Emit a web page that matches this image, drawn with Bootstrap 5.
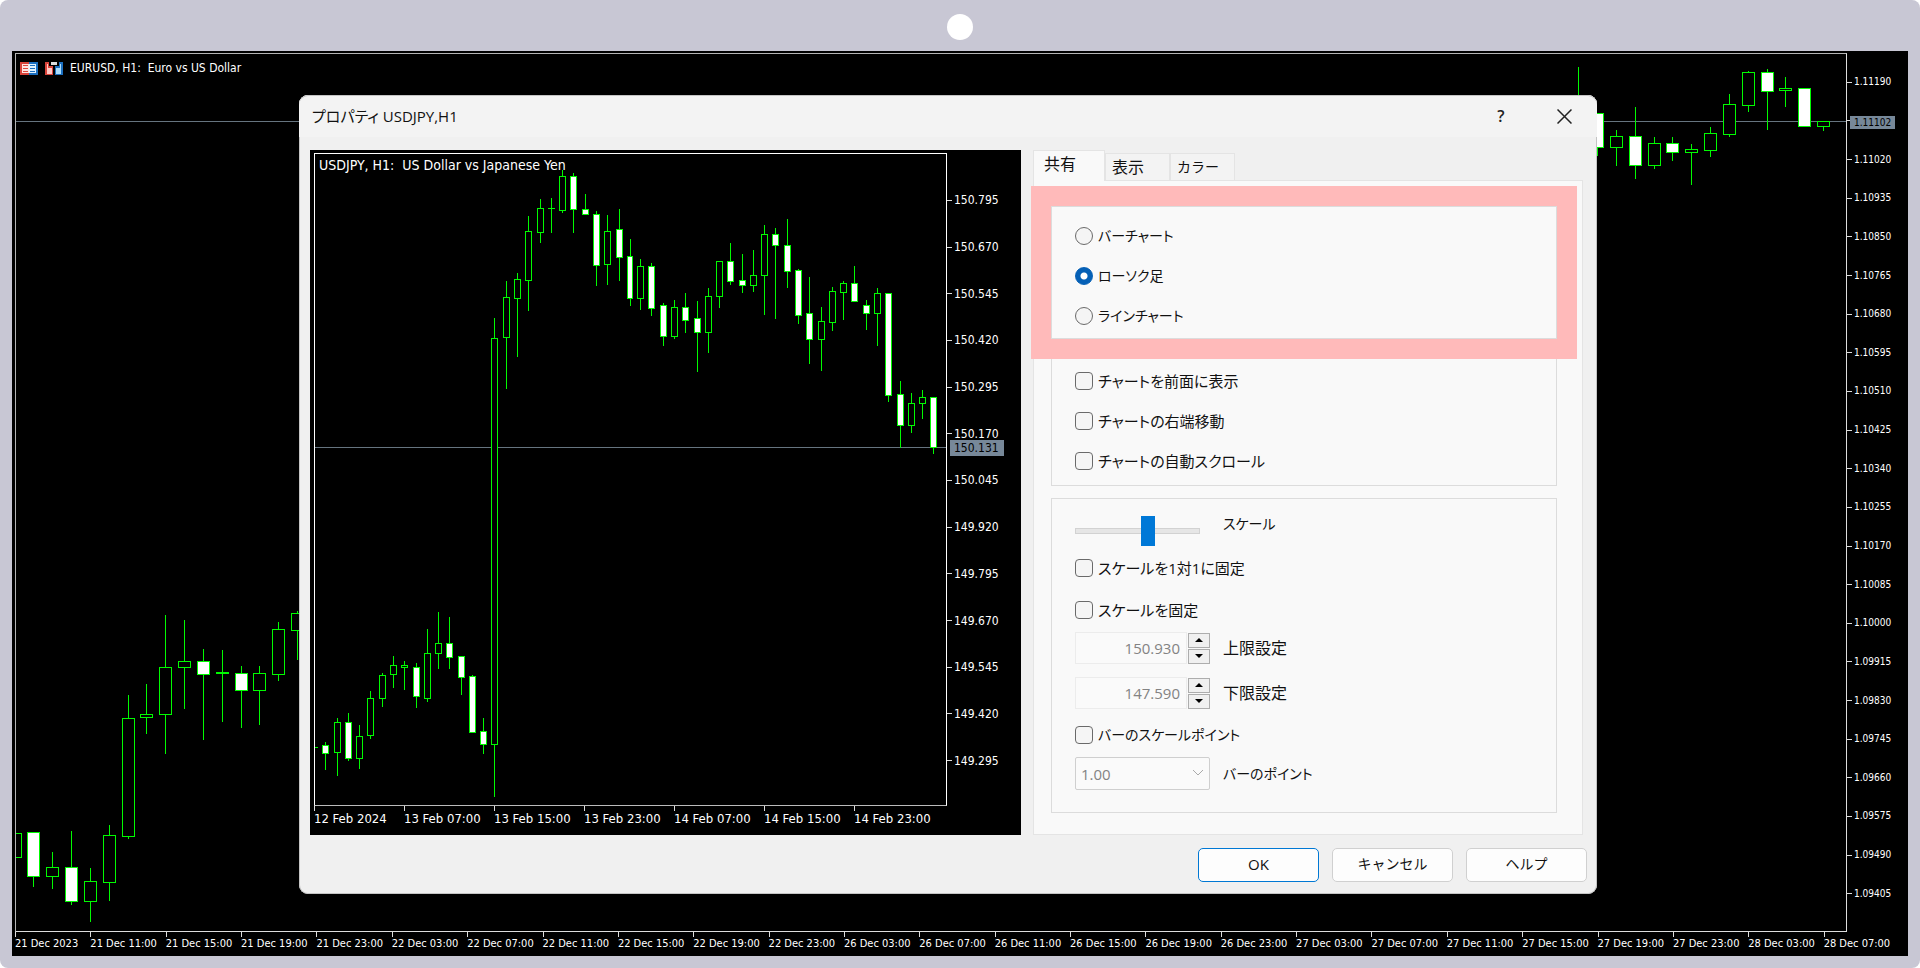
<!DOCTYPE html>
<html lang="ja">
<head>
<meta charset="utf-8">
<meta name="viewport" content="width=device-width, initial-scale=1">
<title>プロパティ USDJPY,H1</title>
<link href="https://cdn.jsdelivr.net/npm/bootstrap@5.3.0/dist/css/bootstrap.min.css" rel="stylesheet">
<style>
  html { background: #fff; }
  body { background: #fff; font-family: "Open Sans", "Noto Sans CJK JP", sans-serif; font-size: 16px; line-height: 24px; color: #111; }
  .bezel { background: #c8c7d4; border-radius: 8px; padding: 0 12px 12px; }
  .bezel-top { height: 52px; padding-top: 2px; }
  .camera { width: 26px; height: 26px; background: #fff; border-radius: 50%; }

  /* chart frames */
  .chart { background: #000; color: #fff; font-family: "DejaVu Sans Condensed", "DejaVu Sans", sans-serif; display: grid; min-width: 0; }
  .chart-main { grid-template: minmax(0, 1fr) 24px / minmax(0, 1fr) 61px; padding: 2px 0 0 3px; font-size: 10px; }
  .chart-preview { grid-template: minmax(0, 1fr) 29px / minmax(0, 1fr) 74px; padding: 3px 0 0 4px; font-size: 12px; }
  .plot { border: 1px solid #b4b4b4; border-bottom-color: #ddd; border-right-color: #ddd; min-height: 0; }
  .chart-preview .plot { border-color: #fff; border-bottom-color: #bbb; }
  .candles { display: block; width: 100%; height: 100%; }
  .caption-line { top: 0; left: 0; white-space: pre; }
  .chart-main .caption-line { padding: 7px 4px; gap: 7px; font-size: 12px; line-height: 14px; }
  .chart-preview .caption-line { padding: 3px 4px; font-size: 14px; line-height: 16px; }
  .prices { line-height: 12px; }
  .chart-main .prices { padding: 10px 0 19px; }
  .chart-preview .prices { padding: 24px 0 22px; }
  .prices span { flex: 1 1 0; display: flex; align-items: center; }
  .prices span::before { content: ""; width: 5px; height: 1px; background: #ddd; margin-right: 2px; }
  .times { grid-column: 1 / -1; }
  .times span { flex: 1 1 0; min-width: 0; white-space: nowrap; }
  .times span::before { content: ""; display: block; width: 1px; height: 5px; background: #ddd; }
  .chart-main .times { font-size: 11px; line-height: 13px; margin-right: 9px; }
  .chart-main .times span { text-indent: -2px; }
  .chart-preview .times { font-size: 13px; line-height: 16px; margin-right: 77px; }
  .bid { background: #778899; color: #000; left: 3px; }
  .chart-main .bid { margin-top: -5px; padding: 0 4px; line-height: 13px; }
  .chart-preview .bid { margin-top: -7px; padding: 0 5px 0 4px; line-height: 16px; }

  /* dialog window */
  .dialog { left: 287px; right: 311px; top: 44px; bottom: 62px; background: #f0f0f0; border-radius: 9px; box-shadow: inset 0 0 0 1px #c4c4c4; font-feature-settings: "palt"; }
  .dialog-title { height: 42px; background: #f3f3f3; border-radius: 9px 9px 0 0; padding: 0 23px 0 13px; box-shadow: inset 0 1px #c4c4c4; font-size: 15px; }
  .dialog-title button { background: none; border: 0; padding: 0; width: 20px; height: 24px; color: #222; }
  .dialog-title .help { margin-right: 43px; font-size: 16px; font-weight: 600; }
  .dialog-body { padding: 13px 14px 0 11px; gap: 12px; }
  .side { width: 550px; flex: none; }
  .tabs { height: 30px; }
  .tabs button { border: 1px solid #e4e4e4; border-bottom: 0; background: #f3f3f3; padding: 0 6px; text-align: left; width: 65px; height: 27px; color: #111; }
  .tabs button.active { width: 72px; height: 31px; background: #f9f9f9; padding: 0 10px 4px; margin-bottom: -1px; z-index: 1; }
  .pane { background: #f9f9f9; border: 1px solid #e4e4e4; padding: 25px 25px 21px 17px; }
  .group { border: 1px solid #dcdcdc; background: #f9f9f9; padding: 0 23px; }
  .group-style { box-shadow: 0 0 0 20px #ffbaba; padding-top: 9px; padding-bottom: 2px; z-index: 1; }
  .group-show { padding-top: 12px; padding-bottom: 4px; margin-top: 9px; }
  .group-scale { margin-top: 12px; padding-top: 13px; }
  .opt { height: 40px; gap: 5px; font-size: 15px; }
  .kana, .opt.kana, .tabs .kana { font-size: 14px; }
  .opt .form-check-input { width: 18px; height: 18px; margin: 0; border: 1px solid #6a6a6a; background-color: #f5f5f5; flex: none; }
  .opt .form-check-input[type=checkbox] { border-radius: 4px; }
  .opt .form-check-input:checked { background: radial-gradient(circle, #fff 0 3px, #0560b6 4px); border-color: #0560b6; }
  .row-line { gap: 13px; }
  .ctl { width: 135px; flex: none; gap: 1px; }
  .gap-top-s { margin-top: 2px; }
  .gap-top-m { margin-top: 6px; }
  .gap-top-l { margin-top: 13px; }
  .scale { appearance: none; display: block; width: 125px; height: 30px; background: none; margin: 4px 0 0; }
  .scale::-webkit-slider-runnable-track { height: 6px; background: #e6e6e6; border: 1px solid #d2d2d2; }
  .scale::-webkit-slider-thumb { appearance: none; width: 14px; height: 30px; margin-top: -13px; background: #0078d7; border: 0; border-radius: 0; }
  .num { width: 112px; height: 32px; border: 1px solid #ececec; background: #fafafa; color: #838383; text-align: right; padding: 0 6px; font-size: 15px; }
  .spin button { width: 22px; height: 15px; border: 1px solid #adadad; background: #f0f0f0; padding: 0; display: flex; align-items: center; justify-content: center; }
  .spin button + button { margin-top: 1px; }
  .points { width: 135px; height: 33px; border: 1px solid #cfcfcf; border-radius: 2px; color: #838383; background: #fafafa; padding: 0 5px; appearance: none; opacity: 1; font-size: 15px; }
  .chev { right: 6px; top: 12px; pointer-events: none; }
  .dialog-foot { padding: 13px 10px 12px; gap: 13px; }
  .dialog-foot button { width: 121px; height: 34px; background: #fdfdfd; border: 1px solid #d0d0d0; border-radius: 5px; padding: 0 0 2px; color: #111; font-size: 14px; }
  .dialog-foot .ok { border-color: #0078d4; font-size: 15px; }
</style>
</head>
<body>
<div class="bezel d-flex flex-column vh-100">
  <header class="bezel-top d-flex justify-content-center align-items-center"><div class="camera"></div></header>

  <main class="flex-grow-1 position-relative d-flex">
    <section class="chart chart-main flex-grow-1" aria-label="EURUSD">
      <div class="plot position-relative">
        <svg class="candles" id="eurusd" viewBox="16 55 1830 877" preserveAspectRatio="none" shape-rendering="crispEdges"></svg>
        <div class="caption-line position-absolute d-flex align-items-center">
          <svg width="18" height="13" viewBox="0 0 18 13"><path fill="#d8433a" d="M0 0h9v13H0z"/><path fill="#1b6fc0" d="M9 0h9v13H9z"/><path fill="#fde4e2" d="M2 2h7v9H2z"/><path fill="#e2f3ff" d="M9 2h7v9H9z"/><path fill="#e0463c" d="M3 3h5v1H3zM3 6h5v1H3zM3 9h5v1H3z"/><path fill="#1b6fc0" d="M10 3h5v1h-5zM10 6h5v1h-5zM10 9h5v1h-5z"/></svg>
          <svg width="18" height="13" viewBox="0 0 18 13"><path fill="#d8433a" d="M0 0h4v4h4v9H0z"/><path fill="#ffc9c5" d="M2 2h1v4h4v6H2z"/><path fill="#1b6fc0" d="M18 0h-4v4h-4v9h8z"/><path fill="#a9dcfb" d="M16 2h-1v4h-4v6h5z"/><path fill="#ddd" d="M6 0h6v3H6z"/></svg>
          <span>EURUSD, H1:  Euro vs US Dollar</span>
        </div>
      </div>
      <div class="prices position-relative d-flex flex-column" id="eurPrices"><div class="bid position-absolute" style="top:7.7%">1.11102</div></div>
      <div class="times d-flex" id="eurTimes"></div>
    </section>

    <section class="dialog position-absolute d-flex flex-column" role="dialog" aria-labelledby="dlgTitle">
      <div class="dialog-title d-flex align-items-center">
        <span id="dlgTitle" class="flex-grow-1">プロパティ USDJPY,H1</span>
        <button type="button" aria-label="ヘルプ" class="help">?</button>
        <button type="button" aria-label="閉じる" class="d-flex align-items-center justify-content-center"><svg width="15" height="15" viewBox="0 0 15 15"><path d="M.5.5l14 14m0-14l-14 14" stroke="#222" stroke-width="1.5"/></svg></button>
      </div>

      <div class="dialog-body d-flex flex-grow-1">
        <div class="chart chart-preview flex-grow-1">
          <div class="plot position-relative">
            <svg class="candles" id="usdjpy" viewBox="315 155 632 651" preserveAspectRatio="none" shape-rendering="crispEdges"></svg>
            <div class="caption-line position-absolute">USDJPY, H1:  US Dollar vs Japanese Yen</div>
          </div>
          <div class="prices position-relative d-flex flex-column" id="jpyPrices"><div class="bid position-absolute" style="top:45%">150.131</div></div>
          <div class="times d-flex" id="jpyTimes"></div>
        </div>

        <div class="side d-flex flex-column">
          <div class="tabs d-flex align-items-end" role="tablist">
            <button type="button" role="tab" class="active position-relative">共有</button>
            <button type="button" role="tab">表示</button>
            <button type="button" role="tab" class="kana">カラー</button>
          </div>
          <form class="pane flex-grow-1 d-flex flex-column">
            <div class="group group-style position-relative">
              <div class="opt kana d-flex align-items-center"><input class="form-check-input" type="radio" name="style" id="s1"><label for="s1">バーチャート</label></div>
              <div class="opt kana d-flex align-items-center"><input class="form-check-input" type="radio" name="style" id="s2" checked><label for="s2">ローソク足</label></div>
              <div class="opt kana d-flex align-items-center"><input class="form-check-input" type="radio" name="style" id="s3"><label for="s3">ラインチャート</label></div>
            </div>
            <div class="group group-show">
              <div class="opt d-flex align-items-center"><input class="form-check-input" type="checkbox" id="c1"><label for="c1">チャートを前面に表示</label></div>
              <div class="opt d-flex align-items-center"><input class="form-check-input" type="checkbox" id="c2"><label for="c2">チャートの右端移動</label></div>
              <div class="opt d-flex align-items-center"><input class="form-check-input" type="checkbox" id="c3"><label for="c3">チャートの自動スクロール</label></div>
            </div>
            <div class="group group-scale flex-grow-1">
              <div class="row-line d-flex"><div class="ctl"><input class="scale" type="range" id="scale" min="0" max="5" value="3"></div><label class="kana" for="scale">スケール</label></div>
              <div class="opt d-flex align-items-center gap-top-s"><input class="form-check-input" type="checkbox" id="c4"><label for="c4">スケールを1対1に固定</label></div>
              <div class="opt d-flex align-items-center gap-top-s"><input class="form-check-input" type="checkbox" id="c5"><label for="c5">スケールを固定</label></div>
              <div class="row-line d-flex align-items-center gap-top-s">
                <div class="ctl d-flex align-items-center"><input class="num" id="n1" type="text" value="150.930" disabled><div class="spin"><button type="button" aria-label="上げる"><svg width="8" height="4"><path d="M0 4L4 0l4 4z"/></svg></button><button type="button" aria-label="下げる"><svg width="8" height="4"><path d="M0 0l4 4 4-4z"/></svg></button></div></div>
                <label for="n1">上限設定</label>
              </div>
              <div class="row-line d-flex align-items-center gap-top-l">
                <div class="ctl d-flex align-items-center"><input class="num" id="n2" type="text" value="147.590" disabled><div class="spin"><button type="button" aria-label="上げる"><svg width="8" height="4"><path d="M0 4L4 0l4 4z"/></svg></button><button type="button" aria-label="下げる"><svg width="8" height="4"><path d="M0 0l4 4 4-4z"/></svg></button></div></div>
                <label for="n2">下限設定</label>
              </div>
              <div class="opt kana d-flex align-items-center gap-top-m"><input class="form-check-input" type="checkbox" id="c6"><label for="c6">バーのスケールポイント</label></div>
              <div class="row-line d-flex align-items-center gap-top-s">
                <div class="ctl position-relative"><select class="points d-block" id="pts" disabled><option>1.00</option></select><svg class="chev position-absolute" width="12" height="8" viewBox="0 0 12 8"><path d="M1 1l5 5 5-5" fill="none" stroke="#aaa"/></svg></div>
                <label class="kana" for="pts">バーのポイント</label>
              </div>
            </div>
          </form>
        </div>
      </div>

      <div class="dialog-foot d-flex justify-content-end">
        <button type="button" class="ok">OK</button>
        <button type="button">キャンセル</button>
        <button type="button">ヘルプ</button>
      </div>
    </section>
  </main>
</div>

<script src="https://cdn.jsdelivr.net/npm/bootstrap@5.3.0/dist/js/bootstrap.bundle.min.js"></script>
<script>
// each candle: index, high, body top, body bottom, low, 1 = falling
const eur = [[0,834,834,858,858,0],[1,833,833,877,887,1],[2,853,868,877,889,0],[3,832,868,902,905,1],[4,869,882,902,922,0],[5,826,836,883,901,0],[6,696,719,837,839,0],[7,685,715,718,734,0],[8,616,668,715,754,0],[9,621,662,668,709,0],[10,650,662,675,740,1],[11,651,673,674,722,0],[12,667,674,691,728,1],[13,667,674,691,725,0],[14,623,630,675,681,0],[15,612,614,631,660,0],
[83,68,100,110,112,0],[84,114,114,148,156,1],[85,131,137,148,166,0],[86,108,137,166,179,1],[87,138,144,166,169,0],[88,138,144,153,161,1],[89,145,150,153,185,0],[90,128,134,151,157,0],[91,95,105,135,137,0],[92,72,73,106,112,0],[93,70,73,92,130,1],[94,78,89,91,107,0],[95,89,89,127,127,1],[96,122,122,127,131,0]];
const jpy = [[0,748,748,748,748,0],[1,743,746,754,770,1],[2,719,723,753,776,0],[3,714,723,759,761,1],[4,726,737,759,769,0],[5,692,699,736,739,0],[6,674,676,699,707,0],[7,657,666,675,688,0],[8,662,666,668,690,0],[9,664,668,697,708,1],[10,630,654,699,702,0],[11,613,644,654,669,0],[12,618,644,658,669,1],[13,657,657,678,695,1],[14,676,677,733,733,1],[15,719,732,745,754,1],[16,319,339,745,797,0],[17,282,298,338,389,0],[18,274,280,299,357,0],[19,217,232,281,311,0],[20,200,209,233,243,0],[21,199,209,209,233,0],[22,171,177,211,213,0],[23,174,177,210,233,1],[24,195,210,215,215,1],[25,212,215,266,286,1],[26,216,232,265,285,0],[27,210,230,258,281,1],[28,240,257,299,306,1],[29,260,267,299,310,0],[30,264,267,309,316,1],[31,304,306,337,346,1],[32,301,308,337,339,0],[33,294,308,321,333,1],[34,302,319,333,372,1],[35,289,297,333,353,0],[36,262,262,297,308,0],[37,244,262,282,285,1],[38,255,281,286,293,1],[39,251,276,286,292,0],[40,226,235,276,315,0],[41,229,235,246,319,1],[42,220,246,272,288,1],[43,270,271,316,324,1],[44,278,314,340,364,1],[45,308,322,340,371,0],[46,288,292,323,331,0],[47,282,284,293,320,0],[48,267,284,302,302,1],[49,301,306,314,330,1],[50,289,294,314,346,0],[51,294,294,396,402,1],[52,382,395,426,448,1],[53,394,404,426,433,0],[54,391,398,404,419,0],[55,398,398,448,454,1]];

function draw(id, data, x0, step, half, bidY, x1) {
  let s = `<rect x="${x0}" y="${bidY}" width="${x1 - x0}" height="1" fill="#66747f"/>`;
  for (const [k, hi, top, bot, lo, down] of data) {
    const x = Math.round(x0 + k * step);
    s += `<rect x="${x}" y="${hi}" width="1" height="${lo - hi + 1}" fill="#00fa00"/>`;
    s += `<rect x="${x - half}" y="${top}" width="${2 * half + 1}" height="${bot - top + 1}" fill="#00fa00"/>`;
    if (bot - top > 1) s += `<rect x="${x - half + 1}" y="${top + 1}" width="${2 * half - 1}" height="${bot - top - 1}" fill="${down ? '#fff' : '#000'}"/>`;
  }
  document.getElementById(id).innerHTML = s;
}
draw('eurusd', eur, 14.5, 18.84, 6, 122, 1846);
draw('usdjpy', jpy, 314, 11.28, 3, 448, 947);

function labels(id, list) {
  document.getElementById(id).insertAdjacentHTML('beforeend', list.map(t => `<span>${t}</span>`).join(''));
}
const range = (n, f) => Array.from({ length: n }, (_, i) => f(i));
labels('eurPrices', range(22, i => i === 1 ? '' : (1.1119 - i * 0.00085).toFixed(5)));
labels('jpyPrices', range(13, i => (150.795 - i * 0.125).toFixed(3)));
labels('eurTimes', ['21 Dec 2023','21 Dec 11:00','21 Dec 15:00','21 Dec 19:00','21 Dec 23:00','22 Dec 03:00','22 Dec 07:00','22 Dec 11:00','22 Dec 15:00','22 Dec 19:00','22 Dec 23:00','26 Dec 03:00','26 Dec 07:00','26 Dec 11:00','26 Dec 15:00','26 Dec 19:00','26 Dec 23:00','27 Dec 03:00','27 Dec 07:00','27 Dec 11:00','27 Dec 15:00','27 Dec 19:00','27 Dec 23:00','28 Dec 03:00','28 Dec 07:00']);
labels('jpyTimes', ['12 Feb 2024','13 Feb 07:00','13 Feb 15:00','13 Feb 23:00','14 Feb 07:00','14 Feb 15:00','14 Feb 23:00']);
</script>
</body>
</html>
